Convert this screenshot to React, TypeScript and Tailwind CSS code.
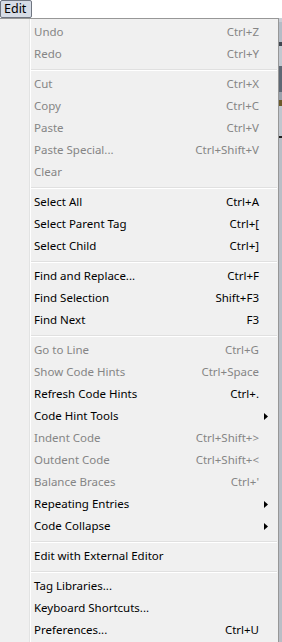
import React from "react";

type Item =
  | { sep: true }
  | { sep?: false; label: string; shortcut?: string; disabled?: boolean; sub?: boolean };

const items: Item[] = [
  { label: "Undo", shortcut: "Ctrl+Z", disabled: true },
  { label: "Redo", shortcut: "Ctrl+Y", disabled: true },
  { sep: true },
  { label: "Cut", shortcut: "Ctrl+X", disabled: true },
  { label: "Copy", shortcut: "Ctrl+C", disabled: true },
  { label: "Paste", shortcut: "Ctrl+V", disabled: true },
  { label: "Paste Special...", shortcut: "Ctrl+Shift+V", disabled: true },
  { label: "Clear", disabled: true },
  { sep: true },
  { label: "Select All", shortcut: "Ctrl+A" },
  { label: "Select Parent Tag", shortcut: "Ctrl+[" },
  { label: "Select Child", shortcut: "Ctrl+]" },
  { sep: true },
  { label: "Find and Replace...", shortcut: "Ctrl+F" },
  { label: "Find Selection", shortcut: "Shift+F3" },
  { label: "Find Next", shortcut: "F3" },
  { sep: true },
  { label: "Go to Line", shortcut: "Ctrl+G", disabled: true },
  { label: "Show Code Hints", shortcut: "Ctrl+Space", disabled: true },
  { label: "Refresh Code Hints", shortcut: "Ctrl+." },
  { label: "Code Hint Tools", sub: true },
  { label: "Indent Code", shortcut: "Ctrl+Shift+>", disabled: true },
  { label: "Outdent Code", shortcut: "Ctrl+Shift+<", disabled: true },
  { label: "Balance Braces", shortcut: "Ctrl+'", disabled: true },
  { label: "Repeating Entries", sub: true },
  { label: "Code Collapse", sub: true },
  { sep: true },
  { label: "Edit with External Editor" },
  { sep: true },
  { label: "Tag Libraries..." },
  { label: "Keyboard Shortcuts..." },
  { label: "Preferences...", shortcut: "Ctrl+U" },
];

function Arrow() {
  return (
    <svg width="4" height="7" viewBox="0 0 4 7" className="block">
      <path d="M0 0 L4 3.5 L0 7 Z" fill="#000" />
    </svg>
  );
}

export default function App() {
  return (
    <div
      className="w-[282px] h-[642px] overflow-hidden bg-white flex flex-col"
      style={{ fontFamily: '"Noto Sans", "Open Sans", sans-serif' }}
    >
      <div className="h-[18px] shrink-0 flex">
        <div className="w-[32px] h-[18px] border border-[#6f7580] rounded-[2px] bg-[#d6dce6] flex items-center pl-[3px] text-[12.5px] leading-none text-black">
          Edit
        </div>
      </div>
      <div className="flex flex-1 min-h-0">
        <div className="w-[279px] border-t border-r border-[#979797] bg-[#f0f0f0] flex">
          <div className="w-[29px] shrink-0 bg-[#f0f0f0]" />
          <div className="w-px shrink-0 bg-[#e2e3e3]" />
          <div className="w-px shrink-0 bg-white" />
          <div className="flex-1 flex flex-col pt-[2px]">
            {items.map((it, i) =>
              it.sep ? (
                <div key={i} className="h-[8px] pt-[4px] pr-px">
                  <div className="h-px bg-[#e0e0e0]" />
                  <div className="h-px bg-white" />
                </div>
              ) : (
                <div
                  key={i}
                  className={
                    "h-[22px] flex items-center pl-[3px] text-[11.5px] leading-none whitespace-nowrap " +
                    (it.disabled ? "text-[#858585]" : "text-black")
                  }
                >
                  <span className="flex-1">{it.label}</span>
                  {it.shortcut && <span className="text-right">{it.shortcut}</span>}
                  <span className="w-[19px] shrink-0 flex items-center pl-[5px]">
                    {it.sub && <Arrow />}
                  </span>
                </div>
              )
            )}
          </div>
        </div>
        <div className="flex-1 flex flex-col">
          <div className="h-[4px] bg-[#c9ced6]" />
          <div className="h-[20px] bg-[#b4bcc6]" />
          <div className="h-[4px] bg-[#404750]" />
          <div className="h-[20px] bg-[#c2c8d0]" />
          <div className="h-[26px] bg-[#5e6874]" />
          <div className="h-[8px] bg-[#9aa2ac]" />
          <div className="h-[6px] bg-[#6b5a2a]" />
          <div className="h-[30px] bg-[#c0c6ce]" />
          <div className="h-[2px] bg-[#222]" />
          <div className="flex-1 bg-[#b9bec6]" />
        </div>
      </div>
    </div>
  );
}
